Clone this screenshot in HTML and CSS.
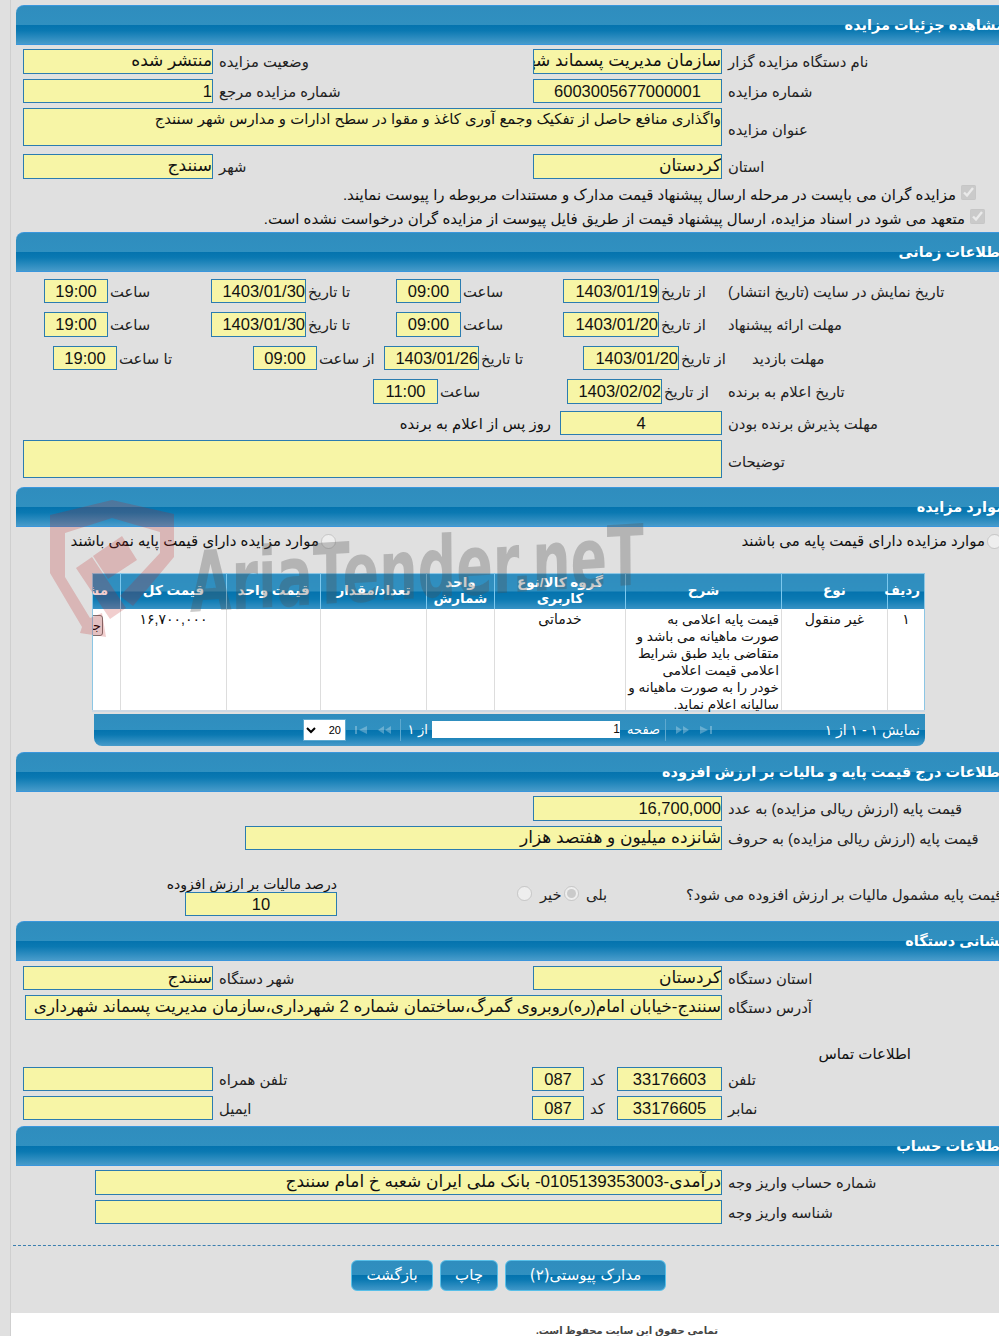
FILE: index.html
```html
<!DOCTYPE html>
<html lang="fa">
<head>
  <meta charset="UTF-8" />
  <title>مشاهده جزئیات مزایده</title>
  <link rel="stylesheet" href="styles.css">
</head>
<body>
  <div class="main">
    <div class="content">

      <!-- جزئیات -->
      <section class="section details">
        <h2 class="section-title">مشاهده جزئیات مزایده</h2>
        <div class="row cols-std h25 mt4">
          <div class="field">منتشر شده</div><div class="label">وضعیت مزایده</div>
          <div class="field">سازمان مدیریت پسماند شهرداری سنندج</div><div class="label">نام دستگاه مزایده گزار</div>
        </div>
        <div class="row cols-std">
          <div class="field num">1</div><div class="label">شماره مزایده مرجع</div>
          <div class="field num center">6003005677000001</div><div class="label">شماره مزایده</div>
        </div>
        <div class="row cols-wide h38">
          <div class="field multi">واگذاری منافع حاصل از تفکیک وجمع آوری کاغذ و مقوا در سطح ادارات و مدارس شهر سنندج</div><div class="label">عنوان مزایده</div>
        </div>
        <div class="row cols-std h25 mt8">
          <div class="field">سنندج</div><div class="label">شهر</div>
          <div class="field">کردستان</div><div class="label">استان</div>
        </div>
        <div class="check-row mt4"><input type="checkbox" checked disabled><span>مزایده گران می بایست در مرحله ارسال پیشنهاد قیمت مدارک و مستندات مربوطه را پیوست نمایند.</span></div>
        <div class="check-row second"><input type="checkbox" checked disabled><span>متعهد می شود در اسناد مزایده، ارسال پیشنهاد قیمت از طریق فایل پیوست از مزایده گران درخواست نشده است.</span></div>
      </section>

      <!-- زمان -->
      <section class="section timing">
        <h2 class="section-title">اطلاعات زمانی</h2>
        <div class="row cols-time-a mt7">
          <div class="field num center">19:00</div><div class="label tight">ساعت</div>
          <div class="field num">1403/01/30</div><div class="label tight">تا تاریخ</div>
          <div class="field num center">09:00</div><div class="label tight">ساعت</div>
          <div class="field num">1403/01/19</div><div class="label tight">از تاریخ</div>
          <div class="label flush">تاریخ نمایش در سایت (تاریخ انتشار)</div>
        </div>
        <div class="row cols-time-a h25 mt9">
          <div class="field num center">19:00</div><div class="label tight">ساعت</div>
          <div class="field num">1403/01/30</div><div class="label tight">تا تاریخ</div>
          <div class="field num center">09:00</div><div class="label tight">ساعت</div>
          <div class="field num">1403/01/20</div><div class="label tight">از تاریخ</div>
          <div class="label flush">مهلت ارائه پیشنهاد</div>
        </div>
        <div class="row cols-time-b mt9">
          <div class="field num center">19:00</div><div class="label tight">تا ساعت</div>
          <div class="field num center">09:00</div><div class="label tight">از ساعت</div>
          <div class="field num">1403/01/26</div><div class="label tight">تا تاریخ</div>
          <div class="field num">1403/01/20</div><div class="label tight">از تاریخ</div>
          <div class="label indent">مهلت بازدید</div>
        </div>
        <div class="row cols-time-c h25 mt9">
          <div class="field num center">11:00</div><div class="label tight">ساعت</div>
          <div class="field num">1403/02/02</div><div class="label tight">از تاریخ</div>
          <div class="label flush">تاریخ اعلام به برنده</div>
        </div>
        <div class="row cols-days mt7">
          <div class="days-note">روز پس از اعلام به برنده</div>
          <div class="field num center">4</div><div class="label">مهلت پذیرش برنده بودن</div>
        </div>
        <div class="row cols-wide h38">
          <div class="field multi"></div><div class="label">توضیحات</div>
        </div>
      </section>

      <!-- موارد -->
      <section class="section items">
        <h2 class="section-title">موارد مزایده</h2>
        <div class="radio-row">
          <label class="radio-second"><input type="radio" name="base" disabled><span>موارد مزایده دارای قیمت پایه نمی باشند</span></label>
          <label class="radio-first"><input type="radio" name="base" disabled><span>موارد مزایده دارای قیمت پایه می باشند</span></label>
        </div>
        <table class="grid">
          <thead>
            <tr>
              <th class="c-row">ردیف</th>
              <th class="c-type">نوع</th>
              <th class="c-desc">شرح</th>
              <th class="c-group">گروه کالا/نوع کاربری</th>
              <th class="c-unit">واحد شمارش</th>
              <th class="c-qty">تعداد/مقدار</th>
              <th class="c-price">قیمت واحد</th>
              <th class="c-total">قیمت کل</th>
              <th class="c-view">مشاهده</th>
            </tr>
          </thead>
          <tbody>
            <tr>
              <td class="center">۱</td>
              <td class="center">غیر منقول</td>
              <td><div class="desc-text">قیمت پایه اعلامی به<br>صورت ماهیانه می باشد و<br>متقاضی باید طبق شرایط<br>اعلامی قیمت اعلامی<br>خودر را به صورت ماهیانه و<br>سالیانه اعلام نماید.</div></td>
              <td class="center">خدماتی</td>
              <td></td>
              <td></td>
              <td></td>
              <td class="center">۱۶,۷۰۰,۰۰۰</td>
              <td class="c-view"><button class="grid-btn">جزئیات</button></td>
            </tr>
          </tbody>
        </table>
        <div class="pager">
          <div class="pager-info">نمایش ۱ - ۱ از ۱</div>
          <svg class="pager-icon" width="13" height="8" viewBox="0 0 13 8"><path d="M0 0l8 4-8 4zM10 0h2v8h-2z"/></svg>
          <svg class="pager-icon next" width="14" height="8" viewBox="0 0 14 8"><path d="M0 0l6 4-6 4zM7 0l6 4-6 4z"/></svg>
          <div class="pager-sep"></div>
          <span class="pager-text page-word">صفحه</span>
          <div class="pager-input">1</div>
          <span class="pager-text of">از ۱</span>
          <div class="pager-sep left"></div>
          <svg class="pager-icon prev" width="14" height="8" viewBox="0 0 14 8"><path d="M14 0l-6 4 6 4zM7 0l-6 4 6 4z"/></svg>
          <svg class="pager-icon next" width="13" height="8" viewBox="0 0 13 8"><path d="M13 0l-8 4 8 4zM1 0h2v8h-2z"/></svg>
          <select class="pager-select"><option>20</option></select>
        </div>
      </section>

      <!-- قیمت -->
      <section class="section pricing">
        <h2 class="section-title">اطلاعات درج قیمت پایه و مالیات بر ارزش افزوده</h2>
        <div class="row cols-price h25 mt4">
          <div class="field num">16,700,000</div><div class="label">قیمت پایه (ارزش ریالی مزایده) به عدد</div>
        </div>
        <div class="row cols-words">
          <div class="field">شانزده میلیون و هفتصد هزار</div><div class="label">قیمت پایه (ارزش ریالی مزایده) به حروف</div>
        </div>
        <div class="vat-row">
          <div class="vat-percent">
            <div class="vat-title">درصد مالیات بر ارزش افزوده</div>
            <div class="field num center">10</div>
          </div>
          <input type="radio" name="vat" disabled>
          <div class="label vat-word no-word">خیر</div>
          <input type="radio" name="vat" checked disabled>
          <div class="label vat-word">بلی</div>
          <div class="label vat-word vat-question">قیمت پایه مشمول مالیات بر ارزش افزوده می شود؟</div>
        </div>
      </section>

      <!-- نشانی -->
      <section class="section office">
        <h2 class="section-title">نشانی دستگاه</h2>
        <div class="row cols-std mt5">
          <div class="field">سنندج</div><div class="label">شهر دستگاه</div>
          <div class="field">کردستان</div><div class="label">استان دستگاه</div>
        </div>
        <div class="row cols-address h25">
          <div class="field address">سنندج-خیابان امام(ره)روبروی گمرگ،ساختمان شماره 2 شهرداری،سازمان مدیریت پسماند شهرداری</div><div class="label">آدرس دستگاه</div>
        </div>
        <div class="contact-title">اطلاعات تماس</div>
        <div class="row cols-contact mt3">
          <div class="field"></div><div class="label">تلفن همراه</div>
          <div class="field num center">087</div><div class="label">کد</div>
          <div class="field num center">33176603</div><div class="label">تلفن</div>
        </div>
        <div class="row cols-contact">
          <div class="field"></div><div class="label">ایمیل</div>
          <div class="field num center">087</div><div class="label">کد</div>
          <div class="field num center">33176605</div><div class="label">نمابر</div>
        </div>
      </section>

      <!-- حساب -->
      <section class="section account">
        <h2 class="section-title">اطلاعات حساب</h2>
        <div class="row cols-account h25 mt4">
          <div class="field">درآمدی-0105139353003- بانک ملی ایران شعبه خ امام سنندج</div><div class="label">شماره حساب واریز وجه</div>
        </div>
        <div class="row cols-account">
          <div class="field"></div><div class="label">شناسه واریز وجه</div>
        </div>
        <div class="dash-line"></div>
        <div class="actions">
          <button class="action-btn back">بازگشت</button>
          <button class="action-btn print">چاپ</button>
          <button class="action-btn docs">مدارک پیوستی(۲)</button>
        </div>
      </section>
    </div>

    <div class="footer">تمامی حقوق این سایت محفوظ است.</div>

    <!-- watermark over the page -->
    <svg class="watermark" width="620" height="160" viewBox="45 495 620 160">
      <path class="wm-red" fill-rule="evenodd" d="M50 515L112 500L174 514V557L133 606L120 596L160 553V532L112 518L65 533V577L90 618L102 613L106 637L80 633L82 627L50 573Z"/>
      <path class="wm-red" d="M76 568L92 557L126 608L110 619ZM93 556L122 536L137 560L108 579Z"/>
      <text class="wm-text" x="0" y="0" textLength="455" lengthAdjust="spacingAndGlyphs" transform="translate(190 612) rotate(-3.5) skewX(-3)">AriaTender.neT</text>
    </svg>
  </div>
</body>
</html>
```

FILE: styles.css
```css
html, body {
  margin: 0;
  height: 1336px;
  overflow: hidden;
}

body {
  background: #e0e0e0;
  font-family: "Liberation Sans", "DejaVu Sans", sans-serif;
  font-size: 15px;
  color: #111;
}

.main {
  position: relative;
  margin-left: 10px;
  width: 988px;
  height: 1336px;
  border-left: 1px solid #cfcfcf;
  overflow: hidden;
}

.content {
  padding-left: 5px;
  height: 1313px;
}

.section-title {
  box-sizing: border-box;
  width: 1000px;
  height: 40px;
  margin: 0;
  padding: 0 11px 0 0;
  direction: rtl;
  line-height: 38px;
  font-size: 14.5px;
  font-weight: bold;
  color: #fff;
  border-top: 1px solid #3a96dc;
  border-bottom: 1px solid #3a96dc;
  border-top-left-radius: 8px;
  background: linear-gradient(#2f8dbe 0, #3090c0 49%, #0473ae 50%, #0b79b2 65%, #479bca 100%);
}

/* sections */
.details { padding: 5px 0 1px; }
.timing { padding-bottom: 9px; }
.items { padding-bottom: 6px; }
.pricing { padding-bottom: 5px; }
.office { padding-bottom: 6px; }

/* rows: fields and labels run left to right, text inside is rtl */
.row {
  display: grid;
  grid-template-rows: 100%;
  height: 24px;
  margin-top: 5px;
  padding-left: 7px;
}
.h25 { height: 25px; }
.h38 { height: 38px; }
.h38 .label { line-height: 44px; }
.mt3 { margin-top: 3px; }
.mt4 { margin-top: 4px; }
.mt5 { margin-top: 5px; }
.mt7 { margin-top: 7px; }
.mt8 { margin-top: 8px; }
.mt9 { margin-top: 9px; }

.cols-std { grid-template-columns: 190px 320px 189px 1fr; }
.cols-wide { grid-template-columns: 699px 1fr; }
.cols-time-a { padding-left: 28px; grid-template-columns: 64px 103px 95px 90px 65px 102px 96px 69px 1fr; }
.cols-time-b { padding-left: 37px; grid-template-columns: 64px 136px 64px 67px 95px 104px 96px 49px 1fr; }
.cols-time-c { padding-left: 357px; grid-template-columns: 65px 129px 95px 66px 1fr; }
.cols-days { grid-template-columns: 537px 162px 1fr; }
.cols-price { padding-left: 517px; grid-template-columns: 189px 1fr; }
.cols-words { padding-left: 229px; grid-template-columns: 477px 1fr; }
.cols-address { padding-left: 9px; grid-template-columns: 697px 1fr; }
.cols-contact { grid-template-columns: 190px 319px 52px 33px 105px 1fr; }
.cols-account { padding-left: 79px; grid-template-columns: 627px 1fr; }

.field {
  box-sizing: border-box;
  height: 100%;
  overflow: hidden;
  direction: rtl;
  text-align: right;
  white-space: nowrap;
  line-height: 22px;
  font-size: 17px;
  background: #f7f5a6;
  border: 1px solid #2b7cb0;
}
.field.num { font-size: 16.5px; direction: ltr; }
.field.center { text-align: center; }
.field.multi { white-space: normal; font-size: 14.9px; line-height: 20px; }
.field.address { font-size: 16.7px; }

.label {
  direction: rtl;
  text-align: left;
  white-space: nowrap;
  padding-left: 6px;
  line-height: 26px;
  font-size: 14.8px;
  color: #222;
}
.label.tight { padding-left: 2px; }
.label.flush { padding-left: 0; }
.label.indent { padding-left: 24px; }

.days-note {
  direction: rtl;
  padding-right: 9px;
  line-height: 26px;
  font-size: 14.8px;
}

.check-row {
  display: flex;
  align-items: center;
  gap: 5px;
  direction: rtl;
  height: 24px;
  padding-right: 14px;
  white-space: nowrap;
  width: 974px;
  box-sizing: border-box;
}
.check-row.second { padding-right: 5px; }
.check-row input { width: 15px; height: 15px; margin: 0 0 6px; }

/* items table */
.radio-row {
  position: relative;
  height: 20px;
  margin-top: 4px;
  white-space: nowrap;
}
.radio-first, .radio-second {
  position: absolute;
  top: 0;
  display: flex;
  align-items: center;
  gap: 2px;
  direction: rtl;
  line-height: 20px;
}
.radio-first { right: -3px; }
.radio-second { right: 663px; }
.radio-row input { width: 15px; height: 15px; margin: 0; }

.grid {
  table-layout: fixed;
  border-collapse: collapse;
  direction: rtl;
  width: 833px;
  margin: 22px 0 0 76px;
  background: #fff;
  border: 1px solid #8cc6e4;
}
.grid th {
  box-sizing: border-box;
  height: 35px;
  padding: 0 4px;
  font-size: 13.5px;
  line-height: 16px;
  color: #fff;
  border-left: 1px solid #7cc8ee;
  background: linear-gradient(#2f8dbe 0, #3090c0 49%, #0473ae 50%, #0b79b2 70%, #3a94c6 100%);
}
.grid td {
  box-sizing: border-box;
  padding: 2px 2px 0;
  vertical-align: top;
  line-height: 17px;
  font-size: 13.5px;
  border-left: 1px solid #ddd;
  border-bottom: 2px solid #ccd9e4;
}
.desc-text {
  height: 99px;
  font-size: 13.6px;
  white-space: nowrap;
}
.grid .center { text-align: center; font-size: 14px; }
.grid .c-view { overflow: hidden; border-left: 0; white-space: nowrap; }
.grid td.c-view { padding: 6px 17px 0 0; }
.grid th.c-view { padding: 0 12px 0 0; text-align: right; }
.c-row { width: 37px; }
.c-type { width: 106px; }
.c-desc { width: 156px; }
.c-group { width: 131px; }
.c-unit { width: 68px; }
.c-qty { width: 106px; }
.c-price { width: 94px; }
.c-total { width: 106px; }
.c-view { width: 28px; }

.grid-btn {
  height: 21px;
  width: 60px;
  padding: 0 1px 0 0;
  font: 13px "DejaVu Sans", sans-serif;
  direction: rtl;
  text-align: right;
  background: #eee;
  border: 1px solid #777;
  border-radius: 3px;
}

.pager {
  display: flex;
  align-items: center;
  direction: rtl;
  box-sizing: border-box;
  width: 831px;
  height: 32px;
  margin: 2px 0 0 78px;
  padding-right: 5px;
  color: #fff;
  font-size: 13px;
  border-radius: 0 0 8px 8px;
  background: linear-gradient(#2f8dbe 0, #3090c0 49%, #0473ae 50%, #0b79b2 65%, #479bca 100%);
}
.pager-info { width: 207px; font-size: 14px; white-space: nowrap; }
.pager-sep { width: 1px; height: 22px; margin-right: 10px; background: #5ea9cf; }
.pager-icon { fill: rgba(255, 255, 255, 0.28); }
.pager-icon.next { margin-right: 10px; }
.pager-icon.prev { margin-right: 9px; }
.pager-text.page-word { margin-right: 5px; width: 34px; }
.pager-input {
  width: 188px;
  height: 17px;
  margin-right: 6px;
  line-height: 17px;
  background: #fff;
  color: #111;
  text-align: right;
  font-size: 12px;
  direction: ltr;
}
.pager-text.of { margin-right: 4px; width: 21px; }
.pager-sep.left { margin-right: 6px; }
.pager-select {
  width: 43px;
  height: 22px;
  margin-right: 8px;
  padding: 0;
  font-size: 11px;
  background: #fff;
  border: 1px solid #5ea9cf;
}

/* vat */
.vat-row {
  display: grid;
  grid-template-columns: 168px 180px 15px 32px 16px 106px 400px;
  height: 42px;
  margin-top: 24px;
  padding-left: 153px;
}
.vat-percent { display: flex; flex-direction: column; align-items: flex-end; grid-column: 1; }
.vat-percent .field { width: 152px; height: 24px; flex: none; }
.vat-title { direction: rtl; height: 18px; line-height: 20px; font-size: 14px; white-space: nowrap; }
.vat-row input { align-self: end; width: 15px; height: 15px; margin: 0 0 15px; }
.vat-row input:first-of-type { grid-column: 3; }
.vat-word { align-self: end; margin-bottom: 8px; font-size: 14.6px; }
.vat-word.no-word { padding-left: 8px; }
.vat-word.vat-question { padding-left: 0; }

.contact-title {
  direction: rtl;
  height: 20px;
  margin-top: 24px;
  padding-right: 72px;
  width: 967px;
  box-sizing: border-box;
  line-height: 20px;
}

/* footer bar */
.dash-line {
  margin: 21px 0 0 -3px;
  border-top: 1px dashed #3a7faf;
}
.actions {
  display: flex;
  gap: 7px;
  margin: 14px 0 0 335px;
}
.action-btn {
  height: 31px;
  padding: 0;
  font: 15px "DejaVu Sans", sans-serif;
  color: #fff;
  border: 1px solid #58bfe8;
  border-radius: 6px;
  background: linear-gradient(#2f8dbe 0, #3090c0 49%, #0473ae 50%, #0b79b2 65%, #3f97c8 100%);
}
.action-btn.back { width: 82px; }
.action-btn.print { width: 58px; }
.action-btn.docs { width: 161px; }

.footer {
  height: 23px;
  box-sizing: border-box;
  padding: 11px 281px 0 0;
  direction: rtl;
  background: #fff;
  color: #444;
  font-size: 10px;
  line-height: 14px;
  font-weight: bold;
}

.watermark {
  position: absolute;
  left: 34px;
  top: 495px;
  pointer-events: none;
}
.wm-red { fill: rgba(190, 30, 30, 0.22); }
.wm-text {
  fill: rgba(80, 80, 80, 0.3);
  font: bold 84px "DejaVu Sans", sans-serif;
}
```
